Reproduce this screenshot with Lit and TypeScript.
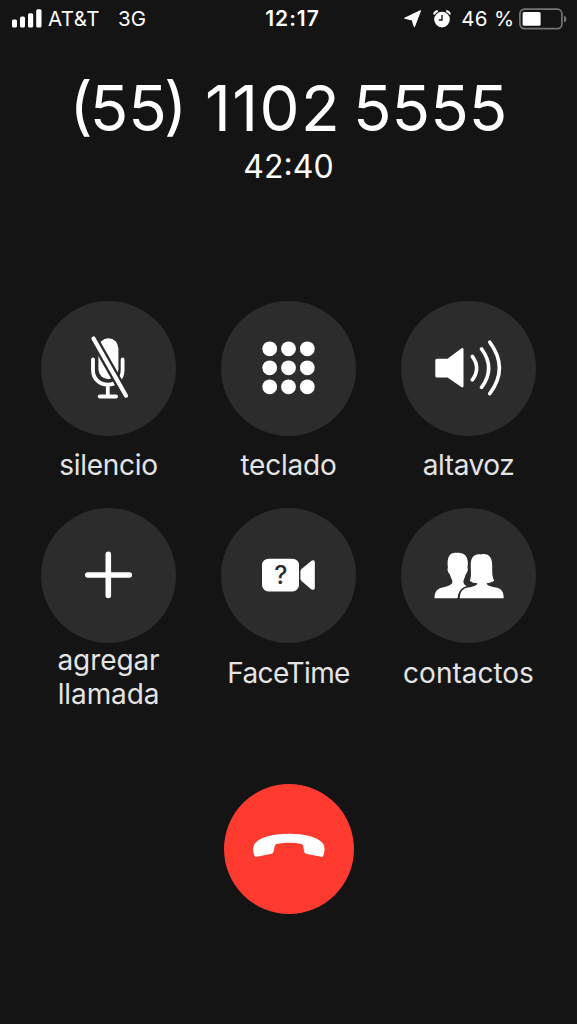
import { LitElement, html, css, svg } from "lit";
import { customElement, property } from "lit/decorators.js";

const icons: Record<string, unknown> = {
  mute: svg`
    <rect x="57.4" y="37.3" width="20" height="41" rx="10" fill="#fff"/>
    <path d="M52 58.5V69C52 78 58.5 83.7 66.8 83.7S81.6 78 81.6 69V58.5M66.8 84v11" fill="none" stroke="#fff" stroke-width="3.8" stroke-linecap="round"/>
    <path d="M58.8 95.6H75" stroke="#fff" stroke-width="4" stroke-linecap="round"/>
    <path d="M48.5 30.5L86.5 97.5" stroke="#2c2c2c" stroke-width="8.8"/>
    <path d="M52.5 37.5L85 94.7" stroke="#fff" stroke-width="4.2" stroke-linecap="round"/>`,
  keypad: svg`${[47.8, 66.8, 85.8].map((y) => [48.7, 67.5, 86.3].map((x) => svg`<circle cx=${x} cy=${y} r="7.4" fill="#fff"/>`))}`,
  speaker: svg`
    <path d="M35.8 57.8H46.5L60.3 47.4Q62.5 46.3 62.5 48.5V85Q62.5 87.2 60.3 86L46.5 76.5H35.8Q34.3 76.5 34.3 75V59.3Q34.3 57.8 35.8 57.8Z" fill="#fff"/>
    <path d="M71.3 55.4Q80 67.2 71.3 78.8M80.6 48Q94.8 67.2 80.6 86.4M88.8 41.2Q108 67.2 88.8 92.7" fill="none" stroke="#fff" stroke-width="3.6" stroke-linecap="round"/>`,
  add: svg`<path d="M46.8 67H88.3M67.3 46.4V87.5" stroke="#fff" stroke-width="5.6" stroke-linecap="round"/>`,
  video: svg`
    <rect x="41" y="50.7" width="37" height="32.7" rx="6.5" fill="#fff"/>
    <path d="M79.4 63.5Q79.4 62.1 80.5 61.1L90.2 53Q93.8 51.1 93.8 54.5V79.5Q93.8 83.1 90.2 81.2L80.5 73Q79.4 72 79.4 70.5Z" fill="#fff"/>
    <text x="59.8" y="76.2" text-anchor="middle" class="mark">?</text>`,
  people: svg`
    <path d="M33.5 90.2C33.7 83.4 36 81.1 41.5 79.6C47.5 77.7 51 76.9 51.4 73.9C51.4 70.9 49.3 69.4 48.7 65.9C47 64.9 46 60.9 46.9 59.9C45.7 50.4 48 44.7 54.5 44.8C62 43.8 68.7 46.9 66.5 59.9C67.4 60.9 66.4 64.9 64.8 65.9C64.2 69.4 62.4 70.9 62.4 73.9C62.9 76.9 65 77.4 66.5 78.4Q57.3 80.9 56.5 90.2Z" fill="#fff"/>
    <path d="M58.8 90.2C59.3 82.9 62 80.7 67 79.6C73 78.2 76.2 77.6 76.4 75.2C73.5 75.2 70.3 74.4 68.8 72.7C71.5 67.4 68.5 56.4 70.5 51.2C72 47.2 75.5 45.9 80 46.4C86 44.8 90.2 47.9 91 54.4C91.6 61.4 90.4 67.4 93.3 72.6C91 74.4 88.3 75.2 85.6 75.2C85.9 77.6 89 78.2 95.2 79.6C100.2 80.9 102.7 83.2 102.7 90.2Z" fill="#fff" class="front"/>`,
};

@customElement("call-action")
class CallAction extends LitElement {
  @property() icon = "";
  @property() label = "";

  static styles = css`
    :host { display: flex; flex-direction: column; align-items: center; width: 180px; height: 207px; }
    .disc { flex: none; width: 135px; height: 135px; border-radius: 50%; background: #2c2c2c; }
    svg { display: block; }
    .mark { font: 500 25px Inter, sans-serif; fill: #2c2c2c; }
    .front { stroke: #2c2c2c; stroke-width: 4px; paint-order: stroke; }
    .label { flex: none; height: 58px; width: 135px; display: flex; align-items: center; justify-content: center; text-align: center; white-space: nowrap; font-size: 28px; line-height: 34px; color: #e4e4e4; }
    .mute { letter-spacing: -0.3px; }
    .keypad { letter-spacing: -0.2px; }
    .speaker { letter-spacing: -0.45px; }
    .label.add { height: 67px; white-space: pre-line; letter-spacing: -0.1px; }
    .video { letter-spacing: -0.6px; height: 60px; }
    .people { height: 60px; }
  `;

  render() {
    return html`
      <div class="disc"><svg width="135" height="135" viewBox="0 0 135 135">${icons[this.icon]}</svg></div>
      <div class="label ${this.icon}">${this.label}</div>`;
  }
}

@customElement("app-root")
class AppRoot extends LitElement {
  static styles = css`
    :host { display: flex; flex-direction: column; align-items: center; height: 1024px; width: 577px; overflow: hidden; background: #141414; color: #fff; font-family: Inter, sans-serif; }
    .status { flex: none; width: 577px; height: 37px; box-sizing: border-box; display: grid; grid-template-columns: 1fr auto 1fr; align-items: center; font-size: 20.5px; line-height: 37px; padding: 0 10px 0 12px; }
    .left, .right { display: flex; align-items: center; }
    .right { justify-content: flex-end; }
    .left svg { margin-right: 6px; }
    .carrier { letter-spacing: 0.45px; }
    .charge { letter-spacing: 0.35px; margin-right: 4.5px; }
    .network { margin-left: 18px; }
    .clock { font-weight: 600; font-size: 21px; letter-spacing: 1px; padding-left: 6px; }
    .arrow { margin-right: 12px; }
    .alarm { margin-right: 10px; }
    svg { display: block; }
    .number { margin-top: 31px; height: 80px; line-height: 80px; font-size: 63.5px; white-space: nowrap; font-feature-settings: "case" 1; }
    .paren { letter-spacing: -3px; }
    .wide { letter-spacing: 1.4px; }
    .gap { letter-spacing: -4.5px; }
    .timer { height: 38px; line-height: 38px; font-size: 32px; }
    .actions { margin-top: 115px; display: grid; grid-template-columns: repeat(3, 180px); }
    .end { margin-top: 69px; width: 130px; height: 130px; border-radius: 50%; background: #ff3b30; }
  `;

  render() {
    return html`
      <div class="status">
        <div class="left">
          <svg width="30" height="20" viewBox="0 0 30 20" fill="#fff">
            <rect x="0" y="10.5" width="5" height="8" rx="1.5"/><rect x="8" y="7.5" width="5" height="11" rx="1.5"/>
            <rect x="16" y="4.3" width="5.2" height="14.2" rx="1.5"/><rect x="24.2" y="0.3" width="5.3" height="18.2" rx="1.5"/>
          </svg>
          <span class="carrier">AT&amp;T</span><span class="network">3G</span>
        </div>
        <div class="clock">12:17</div>
        <div class="right">
          <svg class="arrow" width="17" height="18" viewBox="0 0 17 18"><path d="M16.4 .9L10.4 16.6 8.2 9.9 .8 8.2Z" fill="#fff" stroke="#fff" stroke-width="1.2" stroke-linejoin="round"/></svg>
          <svg class="alarm" width="18" height="18" viewBox="0 0 18 18"><circle cx="9" cy="9.6" r="7.8" fill="#fff"/><path d="M.9 4.5A5 5 0 0 1 4.8 1M17.1 4.5A5 5 0 0 0 13.2 1" fill="none" stroke="#fff" stroke-width="1.8"/><path d="M9 5v5H5.8" fill="none" stroke="#141414" stroke-width="1.4"/></svg>
          <span class="charge">46 %</span>
          <svg width="48" height="22" viewBox="0 0 48 22"><rect x=".9" y="1.2" width="42" height="19.4" rx="4.5" fill="none" stroke="#747474" stroke-width="1.7"/><rect x="3.6" y="4" width="18" height="13.8" rx="1.5" fill="#fff"/><path d="M45 7.5Q47.5 8.5 47.5 11T45 14.5Z" fill="#747474"/></svg>
        </div>
      </div>
      <div class="number"><span class="paren">(</span>5<span class="paren">5</span>) <span class="wide">110</span>2<span class="gap"> </span>5555</div>
      <div class="timer">42:40</div>
      <div class="actions">
        <call-action icon="mute" label="silencio"></call-action>
        <call-action icon="keypad" label="teclado"></call-action>
        <call-action icon="speaker" label="altavoz"></call-action>
        <call-action icon="add" label=${"agregar\nllamada"}></call-action>
        <call-action icon="video" label="FaceTime"></call-action>
        <call-action icon="people" label="contactos"></call-action>
      </div>
      <div class="end">
        <svg width="130" height="130" viewBox="0 0 130 130"><path d="M30.9 72.5C28.5 68 28.4 61.5 31.8 58.5C37 52.5 50 49.7 65 49.7S93 52.5 98 58.5C101.3 61.5 101.2 68 98.8 72.5Q98.3 73 97 72.7L82 69.8Q80.5 69.4 80.2 67.5L79.2 62.5Q78.8 60.3 77.5 59.9Q65 57.5 52.5 59.9Q51 60.3 50.7 62.5L49.6 67.5Q49.2 69.4 47.8 69.8L32.7 72.7Q31.3 73 30.9 72.5Z" fill="#fff"/></svg>
      </div>`;
  }
}
